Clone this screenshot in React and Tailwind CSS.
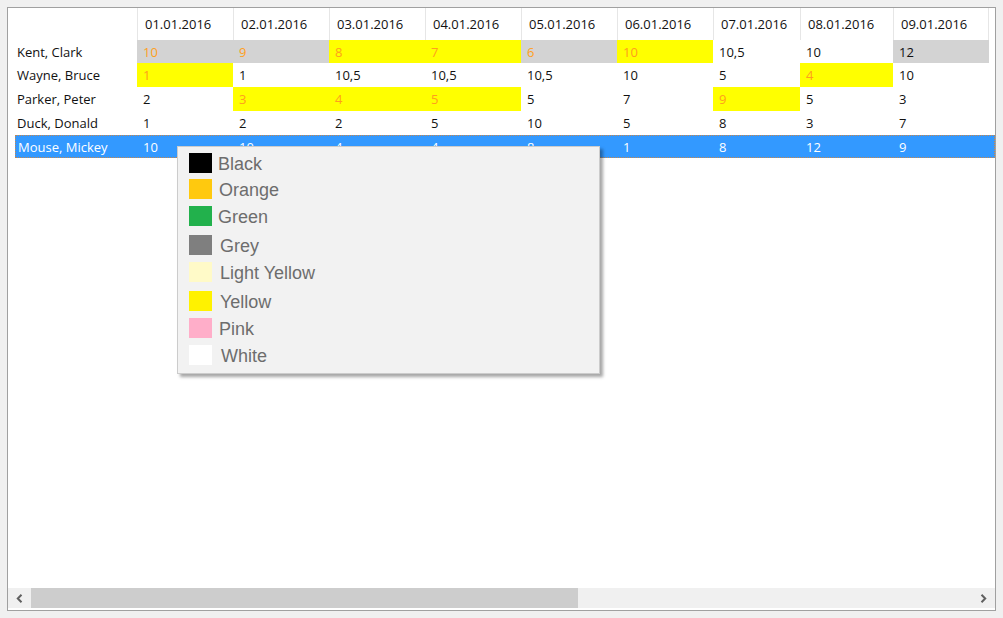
import React from "react";

const cols = [
  { d: "01.01.2016", w: "w-[96px]" },
  { d: "02.01.2016", w: "w-[96px]" },
  { d: "03.01.2016", w: "w-[96px]" },
  { d: "04.01.2016", w: "w-[96px]" },
  { d: "05.01.2016", w: "w-[96px]" },
  { d: "06.01.2016", w: "w-[96px]" },
  { d: "07.01.2016", w: "w-[87px]" },
  { d: "08.01.2016", w: "w-[93px]" },
  { d: "09.01.2016", w: "w-[96px]" },
];

const cls = {
  go: "bg-[#d3d3d3] text-[#ff9f1c]",
  yo: "bg-[#ffff00] text-[#ff9f1c]",
  g: "bg-[#d3d3d3] text-[#111111]",
  n: "text-[#111111]",
};

const rows = [
  {
    name: "Kent, Clark",
    h: "h-[23px]",
    cells: [["10", "go"], ["9", "go"], ["8", "yo"], ["7", "yo"], ["6", "go"], ["10", "yo"], ["10,5", "n"], ["10", "n"], ["12", "g"]],
  },
  {
    name: "Wayne, Bruce",
    h: "h-[24px]",
    cells: [["1", "yo"], ["1", "n"], ["10,5", "n"], ["10,5", "n"], ["10,5", "n"], ["10", "n"], ["5", "n"], ["4", "yo"], ["10", "n"]],
  },
  {
    name: "Parker, Peter",
    h: "h-[24px]",
    cells: [["2", "n"], ["3", "yo"], ["4", "yo"], ["5", "yo"], ["5", "n"], ["7", "n"], ["9", "yo"], ["5", "n"], ["3", "n"]],
  },
  {
    name: "Duck, Donald",
    h: "h-[24px]",
    cells: [["1", "n"], ["2", "n"], ["2", "n"], ["5", "n"], ["10", "n"], ["5", "n"], ["8", "n"], ["3", "n"], ["7", "n"]],
  },
];

const mouse = ["10", "10", "4", "4", "8", "1", "8", "12", "9"];

const menu = [
  { name: "Black", c: "bg-[#000000]", mt: "mt-[6px]", tx: "ml-[6px]" },
  { name: "Orange", c: "bg-[#ffc90e]", mt: "mt-[6px]", tx: "ml-[7px]" },
  { name: "Green", c: "bg-[#22b14c]", mt: "mt-[7px]", tx: "ml-[6px]" },
  { name: "Grey", c: "bg-[#7f7f7f]", mt: "mt-[9px]", tx: "ml-[8px]" },
  { name: "Light Yellow", c: "bg-[#fffac8]", mt: "mt-[7px]", tx: "ml-[8px]" },
  { name: "Yellow", c: "bg-[#fff200]", mt: "mt-[9px]", tx: "ml-[8px]" },
  { name: "Pink", c: "bg-[#ffaec9]", mt: "mt-[7px]", tx: "ml-[7px]" },
  { name: "White", c: "bg-[#ffffff]", mt: "mt-[7px]", tx: "ml-[9px]" },
];

export default function App() {
  return (
    <div className="w-[1003px] h-[618px] bg-[#f0f0f0] pt-[7px] pl-[7px] overflow-hidden" style={{ fontFamily: '"Open Sans", "Noto Sans", sans-serif' }}>
      <div className="relative w-[989px] h-[604px] bg-white border border-[#a0a0a0] flex flex-col">
        <div className="flex-1 text-[13px] leading-none">
          {/* header */}
          <div className="flex h-[32px]">
            <div className="w-[129px]" />
            {cols.map((c, i) => (
              <div
                key={c.d}
                className={`${c.w} flex items-center pl-[7px] pt-[1px] text-[#111111] border-l border-[#e6e6e6] ${i === cols.length - 1 ? "border-r" : ""}`}
              >
                {c.d}
              </div>
            ))}
          </div>
          {rows.map((r) => (
            <div key={r.name} className={`flex ${r.h}`}>
              <div className="w-[129px] pl-[9px] pt-[1px] flex items-center text-[#111111]">{r.name}</div>
              {r.cells.map((c, i) => (
                <div key={i} className={`${cols[i].w} ${cls[c[1]]} pl-[6px] pt-[1px] flex items-center`}>
                  {c[0]}
                </div>
              ))}
            </div>
          ))}
          <div className="flex h-[23px] pl-[7px]">
            <div className="flex flex-1 bg-[#3399ff] text-white outline outline-1 outline-dotted outline-[#c8864a] -outline-offset-1">
              <div className="w-[122px] pl-[3px] pt-[1px] flex items-center">Mouse, Mickey</div>
              {mouse.map((v, i) => (
                <div key={i} className={`${cols[i].w} pl-[6px] pt-[1px] flex items-center`}>
                  {v}
                </div>
              ))}
            </div>
          </div>
        </div>

        {/* horizontal scrollbar */}
        <div className="h-[20px] bg-[#f0f0f0] flex items-stretch mb-[2px]">
          <div className="w-[23px] flex items-center justify-center">
            <svg width="7" height="9" viewBox="0 0 7 9">
              <path d="M5.5 0.8 L1.8 4.5 L5.5 8.2" fill="none" stroke="#606060" strokeWidth="2" />
            </svg>
          </div>
          <div className="w-[547px] bg-[#cdcdcd]" />
          <div className="flex-1" />
          <div className="w-[23px] flex items-center justify-center">
            <svg width="7" height="9" viewBox="0 0 7 9">
              <path d="M1.5 0.8 L5.2 4.5 L1.5 8.2" fill="none" stroke="#606060" strokeWidth="2" />
            </svg>
          </div>
        </div>

        {/* context menu */}
        <div className="absolute left-[169px] top-[138px] w-[423px] h-[228px] bg-[#f2f2f2] border border-[#cccccc] shadow-[3px_3px_3px_rgba(0,0,0,0.35)] pl-[11px]">
          {menu.map((m) => (
            <div key={m.name} className={`flex items-center h-[20px] ${m.mt}`}>
              <div className={`w-[23px] h-[20px] ${m.c}`} />
              <span className={`${m.tx} pt-[2px] text-[18px] leading-none text-[#6d6d6d]`} style={{ fontFamily: '"Liberation Sans", Arial, sans-serif' }}>
                {m.name}
              </span>
            </div>
          ))}
        </div>
      </div>
    </div>
  );
}
